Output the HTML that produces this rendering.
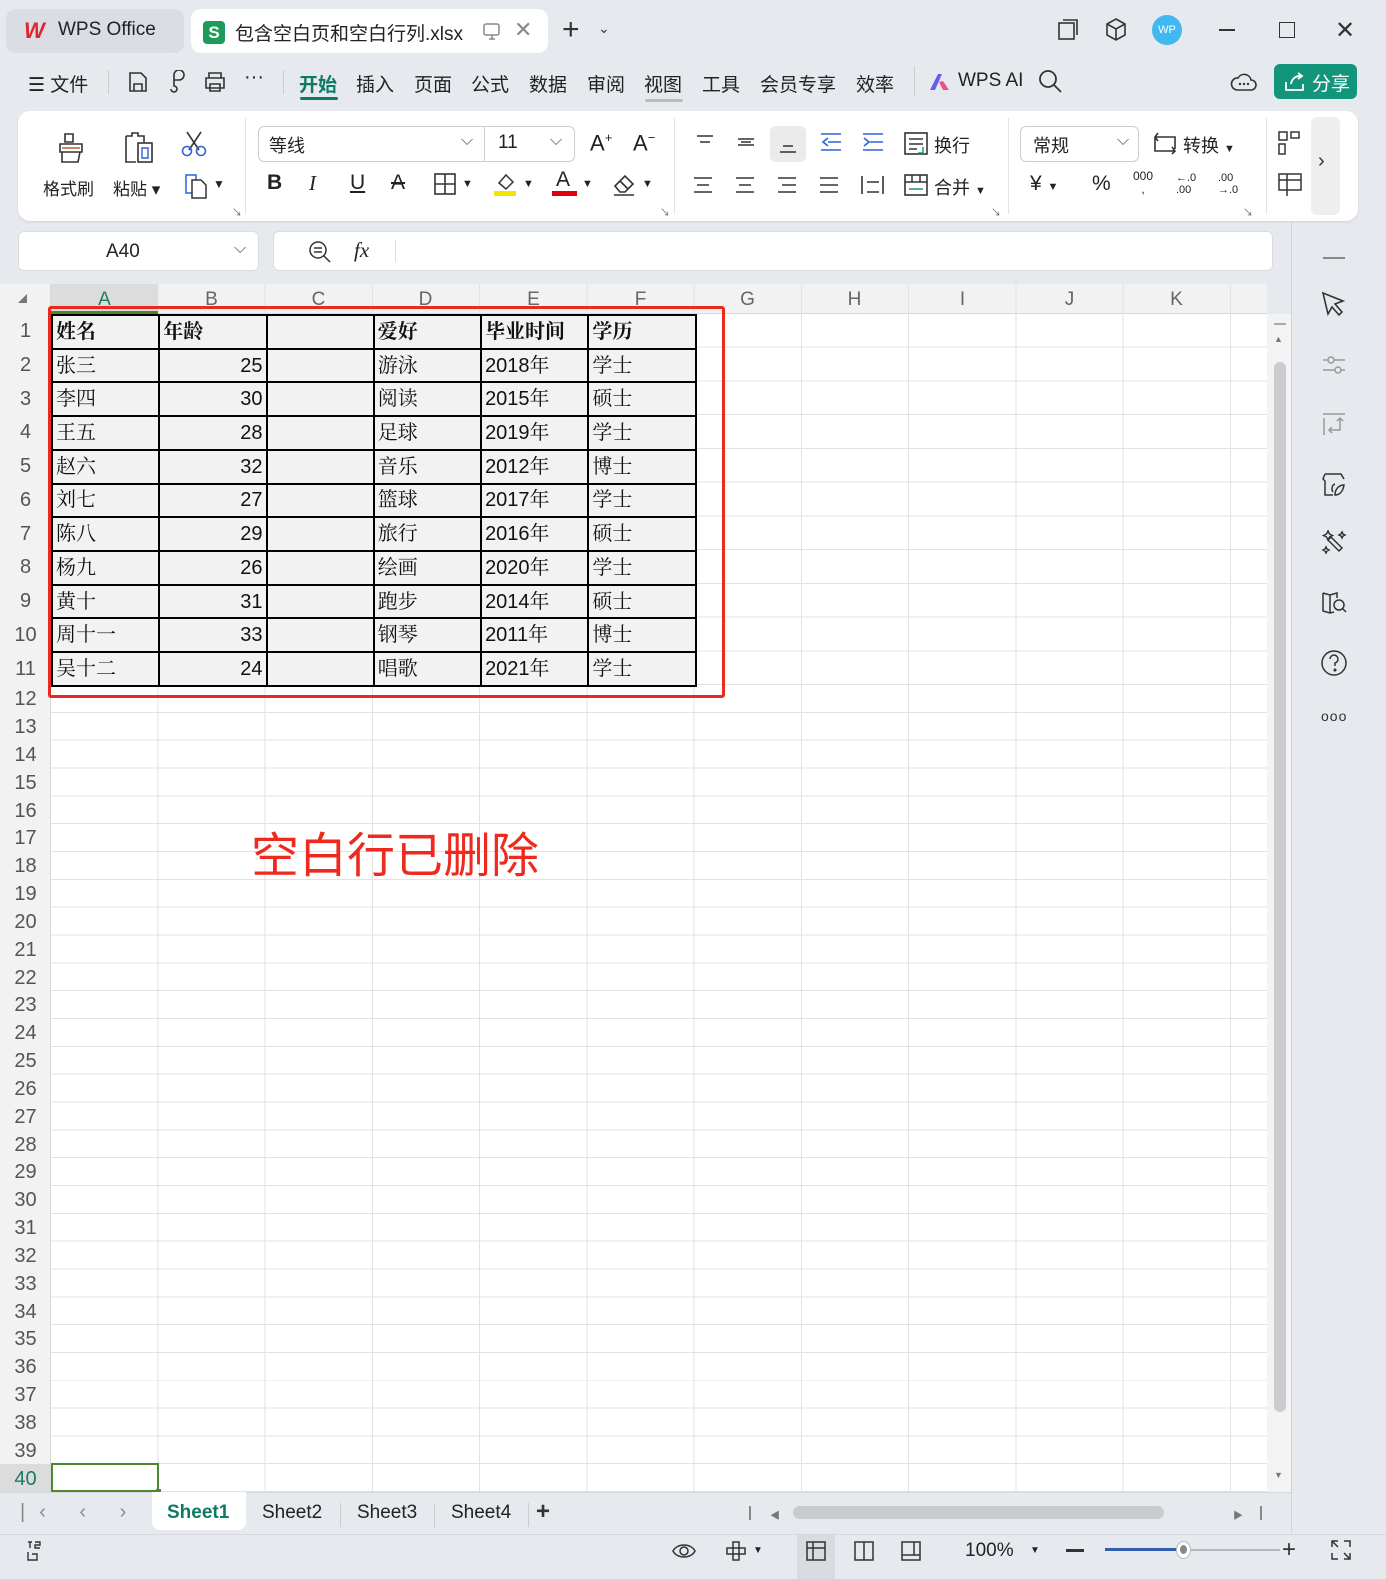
<!DOCTYPE html>
<html><head><meta charset="utf-8"><style>
*{margin:0;padding:0;box-sizing:border-box}
body{width:1386px;height:1579px;background:#e6e9ee;font-family:"Liberation Sans","Noto Sans CJK SC",sans-serif;color:#222;position:relative;overflow:hidden}
.a{position:absolute}
.t{position:absolute;white-space:nowrap}
.rl{position:absolute;left:0;width:51px;height:24px;line-height:24px;text-align:center;font-size:20px;color:#555}
.ch{position:absolute;top:287px;height:26px;line-height:26px;text-align:center;font-size:19px;color:#666;width:107px}
table.d{position:absolute;left:51px;top:314px;border-collapse:collapse;table-layout:fixed;font-family:"Liberation Sans","Noto Serif CJK SC",serif;font-size:20px;color:#111}
table.d td{border:2px solid #000;height:33.73px;width:107.27px;background:#f2f2f2;padding:0 3px;line-height:28px;white-space:nowrap;overflow:hidden}
table.d tr:first-child td{font-weight:bold}
table.d td.n{text-align:right;font-family:"Liberation Sans",sans-serif}
.ic{position:absolute}
.tb{font-size:19px;color:#222}
</style></head><body>

<!-- title bar -->
<div class="a" style="left:6px;top:9px;width:178px;height:44px;background:#dadee4;border-radius:10px"></div>
<div class="t" style="left:24px;top:18px;font-size:22px;color:#e0262a;font-weight:bold;font-style:italic">W</div>
<div class="t" style="left:58px;top:19px;font-size:19px">WPS Office</div>
<div class="a" style="left:191px;top:9px;width:357px;height:44px;background:#fff;border-radius:10px"></div>
<div class="a" style="left:203px;top:21px;width:22px;height:23px;background:#1e9b5a;border-radius:4px;color:#fff;font-size:17px;font-weight:bold;text-align:center;line-height:23px">S</div>
<div class="t" style="left:235px;top:19px;font-size:19px">包含空白页和空白行列.xlsx</div>
<svg class="ic" style="left:482px;top:23px" width="20" height="18"><rect x="2" y="1" width="15" height="11" rx="2" fill="none" stroke="#888" stroke-width="1.5"/><path d="M7 16h6M10 12v4" stroke="#888" stroke-width="1.5"/></svg>
<div class="t" style="left:514px;top:17px;font-size:22px;color:#888">✕</div>
<div class="t" style="left:562px;top:13px;font-size:30px;color:#333">+</div>
<div class="t" style="left:598px;top:20px;font-size:14px;color:#333">⌄</div>
<svg class="ic" style="left:1056px;top:18px" width="24" height="24"><rect x="3" y="5" width="15" height="16" fill="none" stroke="#333" stroke-width="1.6"/><path d="M7 2h14v15" fill="none" stroke="#333" stroke-width="1.6"/></svg>
<svg class="ic" style="left:1104px;top:17px" width="24" height="26"><path d="M12 2l9 5v11l-9 5-9-5V7z M3 7l9 5 9-5M12 12v11" fill="none" stroke="#333" stroke-width="1.6"/></svg>
<div class="a" style="left:1152px;top:15px;width:30px;height:30px;border-radius:50%;background:#42b8f0;color:#fff;font-size:11px;text-align:center;line-height:30px">WP</div>
<div class="a" style="left:1219px;top:29px;width:16px;height:2px;background:#333"></div>
<div class="a" style="left:1279px;top:22px;width:16px;height:16px;border:1.6px solid #333"></div>
<div class="t" style="left:1335px;top:16px;font-size:24px;color:#333">✕</div>

<!-- menu -->
<div class="t tb" style="left:28px;top:70px">☰ 文件</div>
<div class="a" style="left:108px;top:70px;width:1px;height:24px;background:#ccc"></div>
<svg class="ic" style="left:127px;top:70px" width="22" height="24"><path d="M3 3h11l5 5v13H3z M7 21v-7h8v7" fill="none" stroke="#333" stroke-width="1.6"/></svg>
<svg class="ic" style="left:166px;top:70px" width="22" height="24"><path d="M8 12V5a5 5 0 1 1 5 5H8v6a3 3 0 1 1-3 3" fill="none" stroke="#333" stroke-width="1.6"/></svg>
<svg class="ic" style="left:203px;top:70px" width="24" height="24"><path d="M6 8V3h12v5M3 8h18v10H3z M7 14h10v7H7z" fill="none" stroke="#333" stroke-width="1.6"/></svg>
<div class="t tb" style="left:244px;top:66px;font-size:20px">···</div>
<div class="a" style="left:283px;top:70px;width:1px;height:24px;background:#ccc"></div>
<div class="t tb" style="left:299px;top:70px;color:#0f7a64;font-weight:bold">开始</div>
<div class="a" style="left:300px;top:97px;width:38px;height:3px;background:#0f7a64;border-radius:2px"></div>
<div class="t tb" style="left:356px;top:70px">插入</div>
<div class="t tb" style="left:414px;top:70px">页面</div>
<div class="t tb" style="left:471px;top:70px">公式</div>
<div class="t tb" style="left:529px;top:70px">数据</div>
<div class="t tb" style="left:587px;top:70px">审阅</div>
<div class="t tb" style="left:644px;top:70px">视图</div>
<div class="a" style="left:645px;top:99px;width:38px;height:3px;background:#bbb;border-radius:2px"></div>
<div class="t tb" style="left:702px;top:70px">工具</div>
<div class="t tb" style="left:760px;top:70px">会员专享</div>
<div class="t tb" style="left:856px;top:70px">效率</div>
<div class="a" style="left:914px;top:66px;width:1px;height:30px;background:#ccc"></div>
<svg class="ic" style="left:928px;top:72px" width="24" height="20"><path d="M2 18L10 2h4L7 18z" fill="#6a5cf0"/><path d="M11 10l4 8h6l-6-9z" fill="#f0508a"/></svg>
<div class="t tb" style="left:958px;top:70px">WPS AI</div>
<svg class="ic" style="left:1038px;top:69px" width="26" height="26"><circle cx="10" cy="10" r="8" fill="none" stroke="#333" stroke-width="1.8"/><path d="M16 16l7 7" stroke="#333" stroke-width="1.8"/></svg>
<svg class="ic" style="left:1230px;top:70px" width="28" height="24"><path d="M7 20h14a5 5 0 0 0 0-10 7 7 0 0 0-13-2A6 6 0 0 0 7 20z" fill="none" stroke="#333" stroke-width="1.6"/><circle cx="10" cy="14" r="1.2" fill="#333"/><circle cx="14" cy="14" r="1.2" fill="#333"/><circle cx="18" cy="14" r="1.2" fill="#333"/></svg>
<div class="a" style="left:1274px;top:64px;width:83px;height:35px;background:#12957a;border-radius:6px"></div>
<svg class="ic" style="left:1283px;top:70px" width="24" height="24"><path d="M3 12v8h17v-6 M8 14a9 9 0 0 1 10-8 M15 3l4 3-4 3" fill="none" stroke="#fff" stroke-width="1.8"/></svg>
<div class="t" style="left:1312px;top:69px;font-size:19px;color:#fff">分享</div>

<!-- ribbon -->
<div class="a" style="left:18px;top:111px;width:1340px;height:110px;background:#fff;border-radius:12px;box-shadow:0 1px 2px rgba(0,0,0,.1)"></div>
<svg class="ic" style="left:55px;top:130px" width="32" height="34"><path d="M10 4h8v8h-8z M5 14h22v8H5z M7 22v10h16l2-10" fill="none" stroke="#333" stroke-width="1.6"/><path d="M7 18h18" stroke="#c0602a" stroke-width="1.6"/></svg>
<svg class="ic" style="left:122px;top:130px" width="36" height="34"><path d="M4 6h6V3h6v3h6v6 M4 6v26h10" fill="none" stroke="#333" stroke-width="1.6"/><rect x="16" y="13" width="14" height="19" fill="none" stroke="#333" stroke-width="1.6"/><path d="M20 18h6v10h-6z" fill="none" stroke="#2c63d8" stroke-width="1.4"/></svg>
<svg class="ic" style="left:180px;top:130px" width="28" height="28"><path d="M7 2l12 18M21 2L9 20" stroke="#333" stroke-width="1.6"/><circle cx="7" cy="21" r="4.5" fill="none" stroke="#2c63d8" stroke-width="1.6"/><circle cx="21" cy="21" r="4.5" fill="none" stroke="#2c63d8" stroke-width="1.6"/></svg>
<div class="t" style="left:43px;top:175px;font-size:17px">格式刷</div>
<div class="t" style="left:113px;top:175px;font-size:17px">粘贴 ▾</div>
<svg class="ic" style="left:183px;top:172px" width="28" height="28"><path d="M3 3h10v18H3z" fill="none" stroke="#2c63d8" stroke-width="1.5"/><path d="M9 8h9l5 5v13H9z" fill="#fff" stroke="#333" stroke-width="1.5"/></svg>
<div class="t" style="left:213px;top:177px;font-size:12px">▼</div>
<div class="t" style="left:232px;top:204px;font-size:10px;color:#666">↘</div>
<div class="a" style="left:245px;top:118px;width:1px;height:96px;background:#e2e2e2"></div>
<div class="a" style="left:258px;top:126px;width:317px;height:36px;border:1px solid #ccc;border-radius:6px"></div>
<div class="a" style="left:484px;top:127px;width:1px;height:34px;background:#ccc"></div>
<div class="t" style="left:269px;top:132px;font-size:18px">等线</div>
<div class="t" style="left:461px;top:132px;font-size:16px;color:#555">⌵</div>
<div class="t" style="left:498px;top:132px;font-size:19px">11</div>
<div class="t" style="left:550px;top:132px;font-size:16px;color:#555">⌵</div>
<div class="t" style="left:590px;top:130px;font-size:22px">A<sup style="font-size:13px">+</sup></div>
<div class="t" style="left:633px;top:130px;font-size:22px">A<sup style="font-size:13px">−</sup></div>
<div class="t" style="left:267px;top:171px;font-size:21px;font-weight:bold">B</div>
<div class="t" style="left:309px;top:171px;font-size:21px;font-style:italic;font-family:'Liberation Serif',serif">I</div>
<div class="t" style="left:350px;top:171px;font-size:21px;text-decoration:underline">U</div>
<div class="t" style="left:391px;top:171px;font-size:21px;text-decoration:line-through">A</div>
<svg class="ic" style="left:434px;top:173px" width="22" height="22"><rect x="1" y="1" width="20" height="20" fill="none" stroke="#333" stroke-width="1.6"/><path d="M11 1v20M1 11h20" stroke="#333" stroke-width="1.6"/></svg>
<div class="t" style="left:462px;top:178px;font-size:11px">▼</div>
<svg class="ic" style="left:493px;top:171px" width="26" height="26"><path d="M6 12l7-8 7 7-7 7z" fill="none" stroke="#333" stroke-width="1.5"/><rect x="1" y="20" width="22" height="5" fill="#f2e600"/></svg>
<div class="t" style="left:523px;top:178px;font-size:11px">▼</div>
<div class="t" style="left:556px;top:168px;font-size:21px">A</div>
<div class="a" style="left:552px;top:191px;width:25px;height:5px;background:#e0000f"></div>
<div class="t" style="left:582px;top:178px;font-size:11px">▼</div>
<svg class="ic" style="left:611px;top:171px" width="28" height="26"><path d="M4 15l10-10 8 8-8 8H9z M9 10l8 8 M3 24h20" fill="none" stroke="#333" stroke-width="1.6"/></svg>
<div class="t" style="left:642px;top:178px;font-size:11px">▼</div>
<div class="t" style="left:660px;top:204px;font-size:10px;color:#666">↘</div>
<div class="a" style="left:674px;top:118px;width:1px;height:96px;background:#e2e2e2"></div>
<div class="a" style="left:770px;top:126px;width:36px;height:36px;background:#ebebeb;border-radius:6px"></div>
<svg class="ic" style="left:690px;top:130px" width="240" height="70" stroke="#333" stroke-width="1.6" fill="none">
<path d="M7 6h16M10 12h10"/><path d="M48 9h16M48 15h16M51 12h10"/><path d="M90 22h16M93 16h10"/>
<path d="M131 4h20M138 12h13M131 20h20M138 8l-5 4 5 4" stroke="#2c63d8"/>
<path d="M173 4h20M180 12h13M173 20h20M174 8l5 4-5 4" stroke="#2c63d8"/>
<path d="M4 48h18M7 55h12M4 62h18"/><path d="M46 48h18M49 55h12M46 62h18"/><path d="M88 48h18M92 55h14M88 62h18"/><path d="M130 48h18M130 55h18M130 62h18"/>
<path d="M172 46v18M193 46v18M177 62h12M177 52h12"/>
</svg>
<svg class="ic" style="left:903px;top:131px" width="28" height="26"><rect x="2" y="2" width="22" height="21" fill="none" stroke="#333" stroke-width="1.6"/><path d="M6 8h14M6 13h14M6 18h8" stroke="#333" stroke-width="1.5"/><path d="M20 16v6h-5" stroke="#1e9b5a" stroke-width="1.5" fill="none"/></svg>
<div class="t" style="left:934px;top:132px;font-size:18px">换行</div>
<svg class="ic" style="left:903px;top:173px" width="28" height="24"><rect x="2" y="2" width="22" height="20" fill="none" stroke="#333" stroke-width="1.6"/><path d="M2 9h22M9 2v7M17 2v7" stroke="#333" stroke-width="1.5"/><path d="M6 16h14" stroke="#1e9b5a" stroke-width="1.5"/></svg>
<div class="t" style="left:934px;top:174px;font-size:18px">合并 <span style="font-size:11px">▼</span></div>
<div class="t" style="left:991px;top:204px;font-size:10px;color:#666">↘</div>
<div class="a" style="left:1008px;top:118px;width:1px;height:96px;background:#e2e2e2"></div>
<div class="a" style="left:1020px;top:126px;width:119px;height:36px;border:1px solid #ccc;border-radius:6px"></div>
<div class="t" style="left:1033px;top:132px;font-size:18px">常规</div>
<div class="t" style="left:1117px;top:132px;font-size:16px;color:#555">⌵</div>
<svg class="ic" style="left:1152px;top:131px" width="28" height="26"><path d="M3 6h20v12M3 6v14h20 M6 2L3 6l3 4 M20 16l3 4-3 3" fill="none" stroke="#333" stroke-width="1.6"/></svg>
<div class="t" style="left:1183px;top:132px;font-size:18px">转换 <span style="font-size:11px">▼</span></div>
<div class="t" style="left:1030px;top:172px;font-size:21px">¥ <span style="font-size:11px">▼</span></div>
<div class="t" style="left:1092px;top:172px;font-size:21px">%</div>
<div class="t" style="left:1133px;top:170px;font-size:12px;line-height:13px;text-align:center">000<br>,</div>
<div class="t" style="left:1176px;top:172px;font-size:11px;line-height:12px">←.0<br>.00</div>
<div class="t" style="left:1218px;top:172px;font-size:11px;line-height:12px">.00<br>→.0</div>
<div class="t" style="left:1243px;top:204px;font-size:10px;color:#666">↘</div>
<div class="a" style="left:1266px;top:118px;width:1px;height:96px;background:#e2e2e2"></div>
<svg class="ic" style="left:1277px;top:130px" width="26" height="26"><path d="M2 2h8v8H2zM14 2h8v6h-8zM2 14h6v10H2z" fill="none" stroke="#333" stroke-width="1.5"/></svg>
<svg class="ic" style="left:1277px;top:172px" width="26" height="26"><path d="M2 2h22v16H2zM2 8h22M10 2v22" fill="none" stroke="#333" stroke-width="1.5"/></svg>
<div class="a" style="left:1311px;top:117px;width:29px;height:98px;background:#eeeeee;border-radius:6px"></div>
<div class="t" style="left:1318px;top:150px;font-size:20px;color:#333">›</div>

<!-- name box / formula -->
<div class="a" style="left:18px;top:231px;width:241px;height:40px;background:#fff;border-radius:6px;border:1px solid #dcdcdc"></div>
<div class="t" style="left:106px;top:241px;font-size:19px">A40</div>
<div class="t" style="left:234px;top:240px;font-size:16px;color:#555">⌵</div>
<div class="a" style="left:273px;top:231px;width:1000px;height:40px;background:#fff;border-radius:6px;border:1px solid #dcdcdc"></div>
<svg class="ic" style="left:308px;top:240px" width="24" height="24"><circle cx="10" cy="10" r="8" fill="none" stroke="#333" stroke-width="1.5"/><path d="M6 8h8M6 12h8M16 16l6 6" stroke="#333" stroke-width="1.5"/></svg>
<div class="t" style="left:354px;top:238px;font-size:21px;font-style:italic;font-family:'Liberation Serif',serif">fx</div>
<div class="a" style="left:395px;top:240px;width:1px;height:22px;background:#ddd"></div>

<!-- grid -->
<div class="a" style="left:0;top:284px;width:1267px;height:1208px;background:#fff"></div>
<div class="a" style="left:0;top:284px;width:1267px;height:30px;background:#f2f2f2;border-bottom:1px solid #d8d8d8"></div>
<div class="a" style="left:0;top:284px;width:51px;height:1208px;background:#f2f2f2;border-right:1px solid #d8d8d8"></div>
<div class="a" style="left:51px;top:284px;width:107px;height:30px;background:#dcdcdc"></div>
<div class="a" style="left:0;top:1464px;width:51px;height:28px;background:#dcdcdc"></div>
<div class="a" style="left:51px;top:284px;width:1216px;height:1208px;background-image:repeating-linear-gradient(90deg,transparent 0,transparent 106.27px,#e2e2e2 106.27px,#e2e2e2 107.27px)"></div>
<div class="a" style="left:51px;top:314px;width:1216px;height:371px;background-image:repeating-linear-gradient(180deg,transparent 0,transparent 32.73px,#e2e2e2 32.73px,#e2e2e2 33.73px)"></div>
<div class="a" style="left:51px;top:685px;width:1216px;height:807px;background-image:repeating-linear-gradient(180deg,transparent 0,transparent 26.83px,#e2e2e2 26.83px,#e2e2e2 27.83px)"></div>
<div class="a" style="left:18px;top:294px;width:0;height:0;border-left:9px solid transparent;border-bottom:9px solid #777"></div>
<div class="ch" style="left:51px;color:#1f7a64">A</div><div class="ch" style="left:158px">B</div><div class="ch" style="left:265px">C</div><div class="ch" style="left:372px">D</div><div class="ch" style="left:480px">E</div><div class="ch" style="left:587px">F</div><div class="ch" style="left:694px">G</div><div class="ch" style="left:801px">H</div><div class="ch" style="left:909px">I</div><div class="ch" style="left:1016px">J</div><div class="ch" style="left:1123px">K</div>
<div class="a" style="left:51px;top:311px;width:107px;height:3px;background:#4a8a2a"></div>

<div class="rl" style="top:319px">1</div><div class="rl" style="top:353px">2</div><div class="rl" style="top:387px">3</div><div class="rl" style="top:420px">4</div><div class="rl" style="top:454px">5</div><div class="rl" style="top:488px">6</div><div class="rl" style="top:522px">7</div><div class="rl" style="top:555px">8</div><div class="rl" style="top:589px">9</div><div class="rl" style="top:623px">10</div><div class="rl" style="top:657px">11</div>
<div class="rl" style="top:687px">12</div><div class="rl" style="top:715px">13</div><div class="rl" style="top:743px">14</div><div class="rl" style="top:771px">15</div><div class="rl" style="top:799px">16</div><div class="rl" style="top:826px">17</div><div class="rl" style="top:854px">18</div><div class="rl" style="top:882px">19</div><div class="rl" style="top:910px">20</div><div class="rl" style="top:938px">21</div><div class="rl" style="top:966px">22</div><div class="rl" style="top:993px">23</div><div class="rl" style="top:1021px">24</div><div class="rl" style="top:1049px">25</div><div class="rl" style="top:1077px">26</div><div class="rl" style="top:1105px">27</div><div class="rl" style="top:1133px">28</div><div class="rl" style="top:1160px">29</div><div class="rl" style="top:1188px">30</div><div class="rl" style="top:1216px">31</div><div class="rl" style="top:1244px">32</div><div class="rl" style="top:1272px">33</div><div class="rl" style="top:1300px">34</div><div class="rl" style="top:1327px">35</div><div class="rl" style="top:1355px">36</div><div class="rl" style="top:1383px">37</div><div class="rl" style="top:1411px">38</div><div class="rl" style="top:1439px">39</div><div class="rl" style="top:1467px;color:#1f7a64">40</div>

<table class="d">
<tr><td>姓名</td><td>年龄</td><td></td><td>爱好</td><td>毕业时间</td><td>学历</td></tr>
<tr><td>张三</td><td class="n">25</td><td></td><td>游泳</td><td>2018年</td><td>学士</td></tr>
<tr><td>李四</td><td class="n">30</td><td></td><td>阅读</td><td>2015年</td><td>硕士</td></tr>
<tr><td>王五</td><td class="n">28</td><td></td><td>足球</td><td>2019年</td><td>学士</td></tr>
<tr><td>赵六</td><td class="n">32</td><td></td><td>音乐</td><td>2012年</td><td>博士</td></tr>
<tr><td>刘七</td><td class="n">27</td><td></td><td>篮球</td><td>2017年</td><td>学士</td></tr>
<tr><td>陈八</td><td class="n">29</td><td></td><td>旅行</td><td>2016年</td><td>硕士</td></tr>
<tr><td>杨九</td><td class="n">26</td><td></td><td>绘画</td><td>2020年</td><td>学士</td></tr>
<tr><td>黄十</td><td class="n">31</td><td></td><td>跑步</td><td>2014年</td><td>硕士</td></tr>
<tr><td>周十一</td><td class="n">33</td><td></td><td>钢琴</td><td>2011年</td><td>博士</td></tr>
<tr><td>吴十二</td><td class="n">24</td><td></td><td>唱歌</td><td>2021年</td><td>学士</td></tr>
</table>

<div class="a" style="left:48px;top:306px;width:677px;height:392px;border:3.5px solid #ea2a20;border-radius:3px"></div>
<div class="t" style="left:251px;top:816px;font-size:48px;color:#ee2a1e;font-family:'Noto Sans CJK SC',sans-serif">空白行已删除</div>

<div class="a" style="left:51px;top:1463px;width:108px;height:29px;border:2.5px solid #4a8a2a"></div>
<div class="a" style="left:156px;top:1489px;width:5px;height:5px;background:#4a8a2a"></div>

<!-- vertical scrollbar -->
<div class="a" style="left:1267px;top:314px;width:24px;height:1178px;background:#f3f3f3"></div>
<div class="a" style="left:1274px;top:323px;width:12px;height:2px;background:#aaa"></div>
<div class="t" style="left:1274px;top:334px;font-size:9px;color:#777">▲</div>
<div class="a" style="left:1274px;top:362px;width:12px;height:1050px;background:#c9cbcf;border-radius:6px"></div>
<div class="t" style="left:1274px;top:1470px;font-size:9px;color:#777">▼</div>
<div class="a" style="left:1291px;top:222px;width:1px;height:1310px;background:#d0d3d8"></div>

<!-- right sidebar icons -->
<div class="a" style="left:1323px;top:257px;width:22px;height:2px;background:#888"></div>
<svg class="ic" style="left:1320px;top:290px" width="28" height="30" fill="none" stroke="#333" stroke-width="1.6"><path d="M3 3l20 8-8 3 7 8-3 3-7-8-4 7z"/></svg>
<svg class="ic" style="left:1320px;top:350px" width="28" height="30" fill="none" stroke="#999" stroke-width="1.5"><path d="M3 10h22M3 20h22"/><circle cx="11" cy="10" r="3" fill="#e6e9ee"/><circle cx="18" cy="20" r="3" fill="#e6e9ee"/></svg>
<svg class="ic" style="left:1320px;top:410px" width="28" height="30" fill="none" stroke="#999" stroke-width="1.5"><path d="M3 4h22M4 8v17M20 8v12H9M12 17l-3 3 3 3M17 11l3-3 3 3"/></svg>
<svg class="ic" style="left:1320px;top:470px" width="28" height="30" fill="none" stroke="#333" stroke-width="1.5"><path d="M5 4h16l3 5M5 4l-2 5 2 2v14h8M15 25c0-6 4-10 9-10-1 6-4 10-9 10zM13 22c-2-3-1-7 2-8"/></svg>
<svg class="ic" style="left:1320px;top:528px" width="28" height="30" fill="none" stroke="#333" stroke-width="1.5"><path d="M8 12l11 11 3-3L11 9zM8 3l1.5 3 3 1.5-3 1.5L8 12 6.5 9 3.5 7.5l3-1.5zM22 4l1 2 2 1-2 1-1 2-1-2-2-1 2-1zM6 19l1 2 2 1-2 1-1 2-1-2-2-1 2-1z"/></svg>
<svg class="ic" style="left:1320px;top:588px" width="28" height="30" fill="none" stroke="#333" stroke-width="1.5"><path d="M3 5l7 2 7-2v5M3 5v18l7 2 4-1M10 7v18"/><circle cx="19" cy="17" r="5"/><path d="M23 21l3 3"/></svg>
<svg class="ic" style="left:1320px;top:648px" width="28" height="30" fill="none" stroke="#333" stroke-width="1.5"><circle cx="14" cy="15" r="12"/><path d="M10 11a4 4 0 1 1 5 4v3"/><circle cx="15" cy="22" r=".8" fill="#333"/></svg>
<div class="t" style="left:1321px;top:708px;font-size:14px;color:#333;letter-spacing:1px">ooo</div>

<!-- sheet tabs -->
<div class="a" style="left:0;top:1492px;width:1291px;height:42px;background:#e6e9ee;border-top:1px solid #d5d8dd"></div>
<div class="t" style="left:20px;top:1501px;font-size:20px;color:#888;letter-spacing:14px">|‹ ‹ › ›|</div>
<div class="a" style="left:152px;top:1492px;width:94px;height:38px;background:#fff;border-radius:0 0 8px 8px"></div>
<div class="t" style="left:167px;top:1502px;font-size:19px;color:#0f7a64;font-weight:bold">Sheet1</div>
<div class="t" style="left:262px;top:1502px;font-size:19px">Sheet2</div>
<div class="a" style="left:340px;top:1503px;width:1px;height:24px;background:#ccc"></div>
<div class="t" style="left:357px;top:1502px;font-size:19px">Sheet3</div>
<div class="a" style="left:434px;top:1503px;width:1px;height:24px;background:#ccc"></div>
<div class="t" style="left:451px;top:1502px;font-size:19px">Sheet4</div>
<div class="a" style="left:528px;top:1503px;width:1px;height:24px;background:#ccc"></div>
<div class="t" style="left:536px;top:1498px;font-size:24px;font-weight:bold;color:#333">+</div>
<div class="a" style="left:749px;top:1506px;width:2px;height:14px;background:#888"></div>
<div class="t" style="left:770px;top:1507px;font-size:10px;color:#777">◀</div>
<div class="a" style="left:793px;top:1506px;width:371px;height:13px;background:#c9cbcf;border-radius:7px"></div>
<div class="t" style="left:1233px;top:1507px;font-size:10px;color:#777">▶</div>
<div class="a" style="left:1260px;top:1506px;width:2px;height:14px;background:#888"></div>

<!-- status bar -->
<div class="a" style="left:0;top:1534px;width:1386px;height:1px;background:#d5d8dd"></div>
<svg class="ic" style="left:24px;top:1540px" width="22" height="22" fill="none" stroke="#333" stroke-width="1.4"><path d="M4 2h4M6 2v6M11 2h5v3h-5v3h5M4 12v8h9v-6H8"/></svg>
<svg class="ic" style="left:672px;top:1541px" width="24" height="20" fill="none" stroke="#333" stroke-width="1.5"><path d="M1 10C5 2 19 2 23 10 19 18 5 18 1 10z"/><circle cx="12" cy="10" r="4"/></svg>
<svg class="ic" style="left:725px;top:1540px" width="22" height="22" fill="none" stroke="#333" stroke-width="1.5"><path d="M8 2h6v18H8zM2 8h18v6H2z"/></svg>
<div class="t" style="left:753px;top:1545px;font-size:10px">▼</div>
<div class="a" style="left:797px;top:1535px;width:38px;height:44px;background:#d8dbe0"></div>
<svg class="ic" style="left:805px;top:1540px" width="22" height="22" fill="none" stroke="#333" stroke-width="1.5"><path d="M2 2h18v18H2zM2 8h18M8 2v18"/></svg>
<svg class="ic" style="left:853px;top:1540px" width="22" height="22" fill="none" stroke="#333" stroke-width="1.5"><path d="M2 2h18v18H2zM11 2v18"/></svg>
<svg class="ic" style="left:900px;top:1540px" width="22" height="22" fill="none" stroke="#333" stroke-width="1.5"><path d="M2 2h18v18H2zM2 15h18M14 2v13"/></svg>
<div class="t" style="left:965px;top:1540px;font-size:19px">100%</div>
<div class="t" style="left:1030px;top:1545px;font-size:10px">▼</div>
<div class="a" style="left:1066px;top:1549px;width:18px;height:3px;background:#333"></div>
<div class="a" style="left:1105px;top:1548px;width:80px;height:3px;background:#2f5fae"></div>
<div class="a" style="left:1185px;top:1549px;width:95px;height:2px;background:#b5b8bd"></div>
<div class="a" style="left:1176px;top:1541px;width:15px;height:18px;border-radius:50%;background:#fff;border:1px solid #bbb"></div>
<div class="a" style="left:1180px;top:1545px;width:7px;height:9px;border-radius:50%;background:#888"></div>
<div class="t" style="left:1282px;top:1536px;font-size:24px;color:#333">+</div>
<svg class="ic" style="left:1330px;top:1539px" width="22" height="22" fill="none" stroke="#333" stroke-width="1.5"><path d="M2 8V2h6M14 2h6v6M20 14v6h-6M8 20H2v-6M2 2l6 6M20 20l-6-6"/></svg>
</body></html>
